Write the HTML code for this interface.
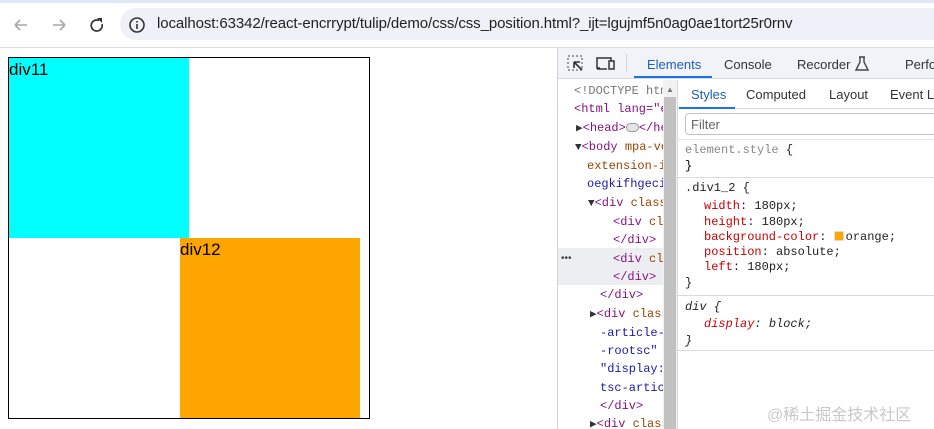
<!DOCTYPE html>
<html><head><style>
*{margin:0;padding:0;box-sizing:border-box}
body{width:934px;height:429px;overflow:hidden;background:#fff;font-family:"Liberation Sans",sans-serif;position:relative}
.abs{position:absolute}
.mono{font-family:"Liberation Mono","DejaVu Sans Mono",monospace;font-size:12px;white-space:nowrap}
.tag{color:#881280}.attr{color:#994500}.val{color:#1a1aa6}
.prop{color:#c80000}
.tri{font-size:11px;color:#333}
</style></head><body>
<div class="abs" style="left:0;top:0;width:934px;height:3px;background:#dfe8f6"></div>
<div class="abs" style="left:0;top:47px;width:934px;height:1px;background:#dde1e6"></div>
<svg class="abs" style="left:12px;top:14px" width="100" height="22" viewBox="0 0 100 22">
<path d="M3 11h12M3 11l5-5M3 11l5 5" stroke="#a4a8ae" stroke-width="1.6" fill="none"/>
<path d="M53 11h-12M53 11l-5-5M53 11l-5 5" stroke="#a4a8ae" stroke-width="1.6" fill="none"/>
<path d="M87 6.5a5.5 5.5 0 1 0 3 3.5" stroke="#333" stroke-width="1.7" fill="none"/><path d="M85 4h5v5z" fill="#333"/>
</svg>
<div class="abs" style="left:120px;top:8px;width:830px;height:32px;border-radius:16px;background:#eef1f7"></div>
<svg class="abs" style="left:128px;top:16px" width="18" height="18"><circle cx="9" cy="9" r="7" stroke="#333" stroke-width="1.6" fill="none"/><rect x="8.2" y="8" width="1.6" height="5" fill="#333"/><rect x="8.2" y="5" width="1.6" height="1.6" fill="#333"/></svg>
<div class="abs" style="left:157px;top:15px;font-size:15px;color:#222;letter-spacing:-0.1px">localhost:63342/react-encrrypt/tulip/demo/css/css_position.html?_ijt=lgujmf5n0ag0ae1tort25r0rnv</div>
<div class="abs" style="left:8px;top:57px;width:362px;height:362px;border:1px solid #000"></div>
<div class="abs" style="left:9px;top:58px;width:180px;height:180px;background:#0ff;font-size:17px;line-height:24px">div11</div>
<div class="abs" style="left:180px;top:238px;width:180px;height:180px;background:#ffa500;font-size:17px;line-height:24px">div12</div>
<div class="abs" style="left:557px;top:48px;width:1px;height:381px;background:#cdd1d6"></div>
<div class="abs" style="left:558px;top:48px;width:376px;height:31px;background:#f1f3f9;border-bottom:1px solid #d6d9de"></div>
<svg class="abs" style="left:567px;top:55px" width="50" height="18">
<rect x="1" y="1" width="14" height="14" fill="none" stroke="#444" stroke-dasharray="2 2"/><path d="M7 7l8 8M7 7v6M7 7h6" stroke="#333" stroke-width="1.6" fill="#fff"/>
<path d="M33 13h-3V3h14v3" stroke="#333" stroke-width="1.5" fill="none"/><rect x="42" y="6" width="5" height="8" fill="none" stroke="#333" stroke-width="1.5"/><path d="M30 14h10" stroke="#333" stroke-width="1.5"/>
</svg>
<div class="abs" style="left:626px;top:54px;width:1px;height:18px;background:#d0d3d8"></div>
<div class="abs" style="left:647px;top:57px;font-size:13px;color:#1a5fb4">Elements</div>
<div class="abs" style="left:634px;top:76px;width:78px;height:2px;background:#1a73e8"></div>
<div class="abs" style="left:724px;top:57px;font-size:13px;color:#333">Console</div>
<div class="abs" style="left:797px;top:57px;font-size:13px;color:#333">Recorder</div>
<svg class="abs" style="left:855px;top:56px" width="14" height="16"><path d="M4 1h6M5 1v5L1 14h12L9 6V1" stroke="#444" stroke-width="1.4" fill="none"/></svg>
<div class="abs" style="left:905px;top:57px;font-size:13px;color:#333">Perfo</div>
<div class="abs" style="left:558px;top:248px;width:105px;height:37px;background:#eceef1"></div>
<div class="abs" style="left:561px;top:253px;font-size:10px;color:#444">•••</div>
<div class="abs mono" style="left:558px;top:82px;width:105px;height:347px;overflow:hidden;line-height:18.3px">
<div style="padding-left:16px;color:#777">&lt;!DOCTYPE html&gt;</div>
<div style="padding-left:16px" class="tag">&lt;html lang="en"&gt;</div>
<div style="padding-left:18px"><span class="tri">▶</span><span class="tag">&lt;head&gt;</span><span style="display:inline-block;width:13px;height:9px;border-radius:5px;background:#e5e5e5;border:1px solid #999;vertical-align:middle"></span><span class="tag">&lt;/head&gt;</span></div>
<div style="padding-left:17px"><span class="tri">▼</span><span class="tag">&lt;body </span><span class="attr">mpa-version</span></div>
<div style="padding-left:29px" class="attr">extension-id</div>
<div style="padding-left:29px" class="val">oegkifhgecim</div>
<div style="padding-left:30px"><span class="tri">▼</span><span class="tag">&lt;div </span><span class="attr">class</span></div>
<div style="padding-left:55px"><span class="tag">&lt;div </span><span class="attr">class</span></div>
<div style="padding-left:55px" class="tag">&lt;/div&gt;</div>
<div style="padding-left:55px"><span class="tag">&lt;div </span><span class="attr">class</span></div>
<div style="padding-left:55px" class="tag">&lt;/div&gt;</div>
<div style="padding-left:42px" class="tag">&lt;/div&gt;</div>
<div style="padding-left:32px"><span class="tri">▶</span><span class="tag">&lt;div </span><span class="attr">class</span></div>
<div style="padding-left:42px" class="val">-article-</div>
<div style="padding-left:42px" class="val">-rootsc"</div>
<div style="padding-left:42px" class="val">"display:</div>
<div style="padding-left:42px" class="val">tsc-artic</div>
<div style="padding-left:42px" class="tag">&lt;/div&gt;</div>
<div style="padding-left:32px"><span class="tri">▶</span><span class="tag">&lt;div </span><span class="attr">class</span></div>
</div>
<div class="abs" style="left:663px;top:80px;width:14px;height:349px;background:#f1f1f1"></div>
<div class="abs" style="left:664px;top:97px;width:12px;height:332px;background:#c1c1c1"></div>
<div class="abs" style="left:666px;top:85px;font-size:8px;color:#777">▲</div>
<div class="abs" style="left:677px;top:80px;width:1px;height:349px;background:#d6d9de"></div>
<div class="abs" style="left:678px;top:80px;width:256px;height:29px;border-bottom:1px solid #d6d9de"></div>
<div class="abs" style="left:691px;top:87px;font-size:13px;color:#1a5fb4">Styles</div>
<div class="abs" style="left:679px;top:107px;width:56px;height:2px;background:#1a73e8"></div>
<div class="abs" style="left:746px;top:87px;font-size:13px;color:#333">Computed</div>
<div class="abs" style="left:829px;top:87px;font-size:13px;color:#333">Layout</div>
<div class="abs" style="left:890px;top:87px;font-size:13px;color:#333;white-space:nowrap">Event Li</div>
<div class="abs" style="left:685px;top:113px;width:260px;height:22px;border:1px solid #bfc3c8;border-radius:4px"></div>
<div class="abs" style="left:691px;top:117px;font-size:13px;color:#666">Filter</div>
<div class="abs" style="left:678px;top:139px;width:256px;height:1px;background:#e3e6ea"></div>
<div class="abs mono" style="left:685px;top:142px;line-height:16px">
<div style="color:#888">element.style <span style="color:#222">{</span></div>
<div>}</div>
</div>
<div class="abs" style="left:678px;top:177px;width:256px;height:1px;background:#d6d9de"></div>
<div class="abs mono" style="left:685px;top:181px;line-height:15.3px;color:#222">
<div style="margin-bottom:3px">.div1_2 {</div>
<div style="padding-left:19px"><span class="prop">width</span>: 180px;</div>
<div style="padding-left:19px"><span class="prop">height</span>: 180px;</div>
<div style="padding-left:19px"><span class="prop">background-color</span>: <span style="display:inline-block;width:10px;height:10px;background:#ffa500;border:1px solid #ddd;vertical-align:-1px;margin-right:2px"></span>orange;</div>
<div style="padding-left:19px"><span class="prop">position</span>: absolute;</div>
<div style="padding-left:19px"><span class="prop">left</span>: 180px;</div>
<div>}</div>
</div>
<div class="abs" style="left:678px;top:295px;width:256px;height:1px;background:#d6d9de"></div>
<div class="abs mono" style="left:685px;top:299px;line-height:17px;color:#222;font-style:italic">
<div>div {</div>
<div style="padding-left:19px"><span class="prop">display</span>: block;</div>
<div>}</div>
</div>
<div class="abs" style="left:678px;top:350px;width:256px;height:1px;background:#d6d9de"></div>
<div class="abs" style="left:767px;top:401px;font-size:16px;color:#c8c8c8;font-family:'Liberation Sans','Noto Sans CJK SC',sans-serif">@稀土掘金技术社区</div>
</body></html>
